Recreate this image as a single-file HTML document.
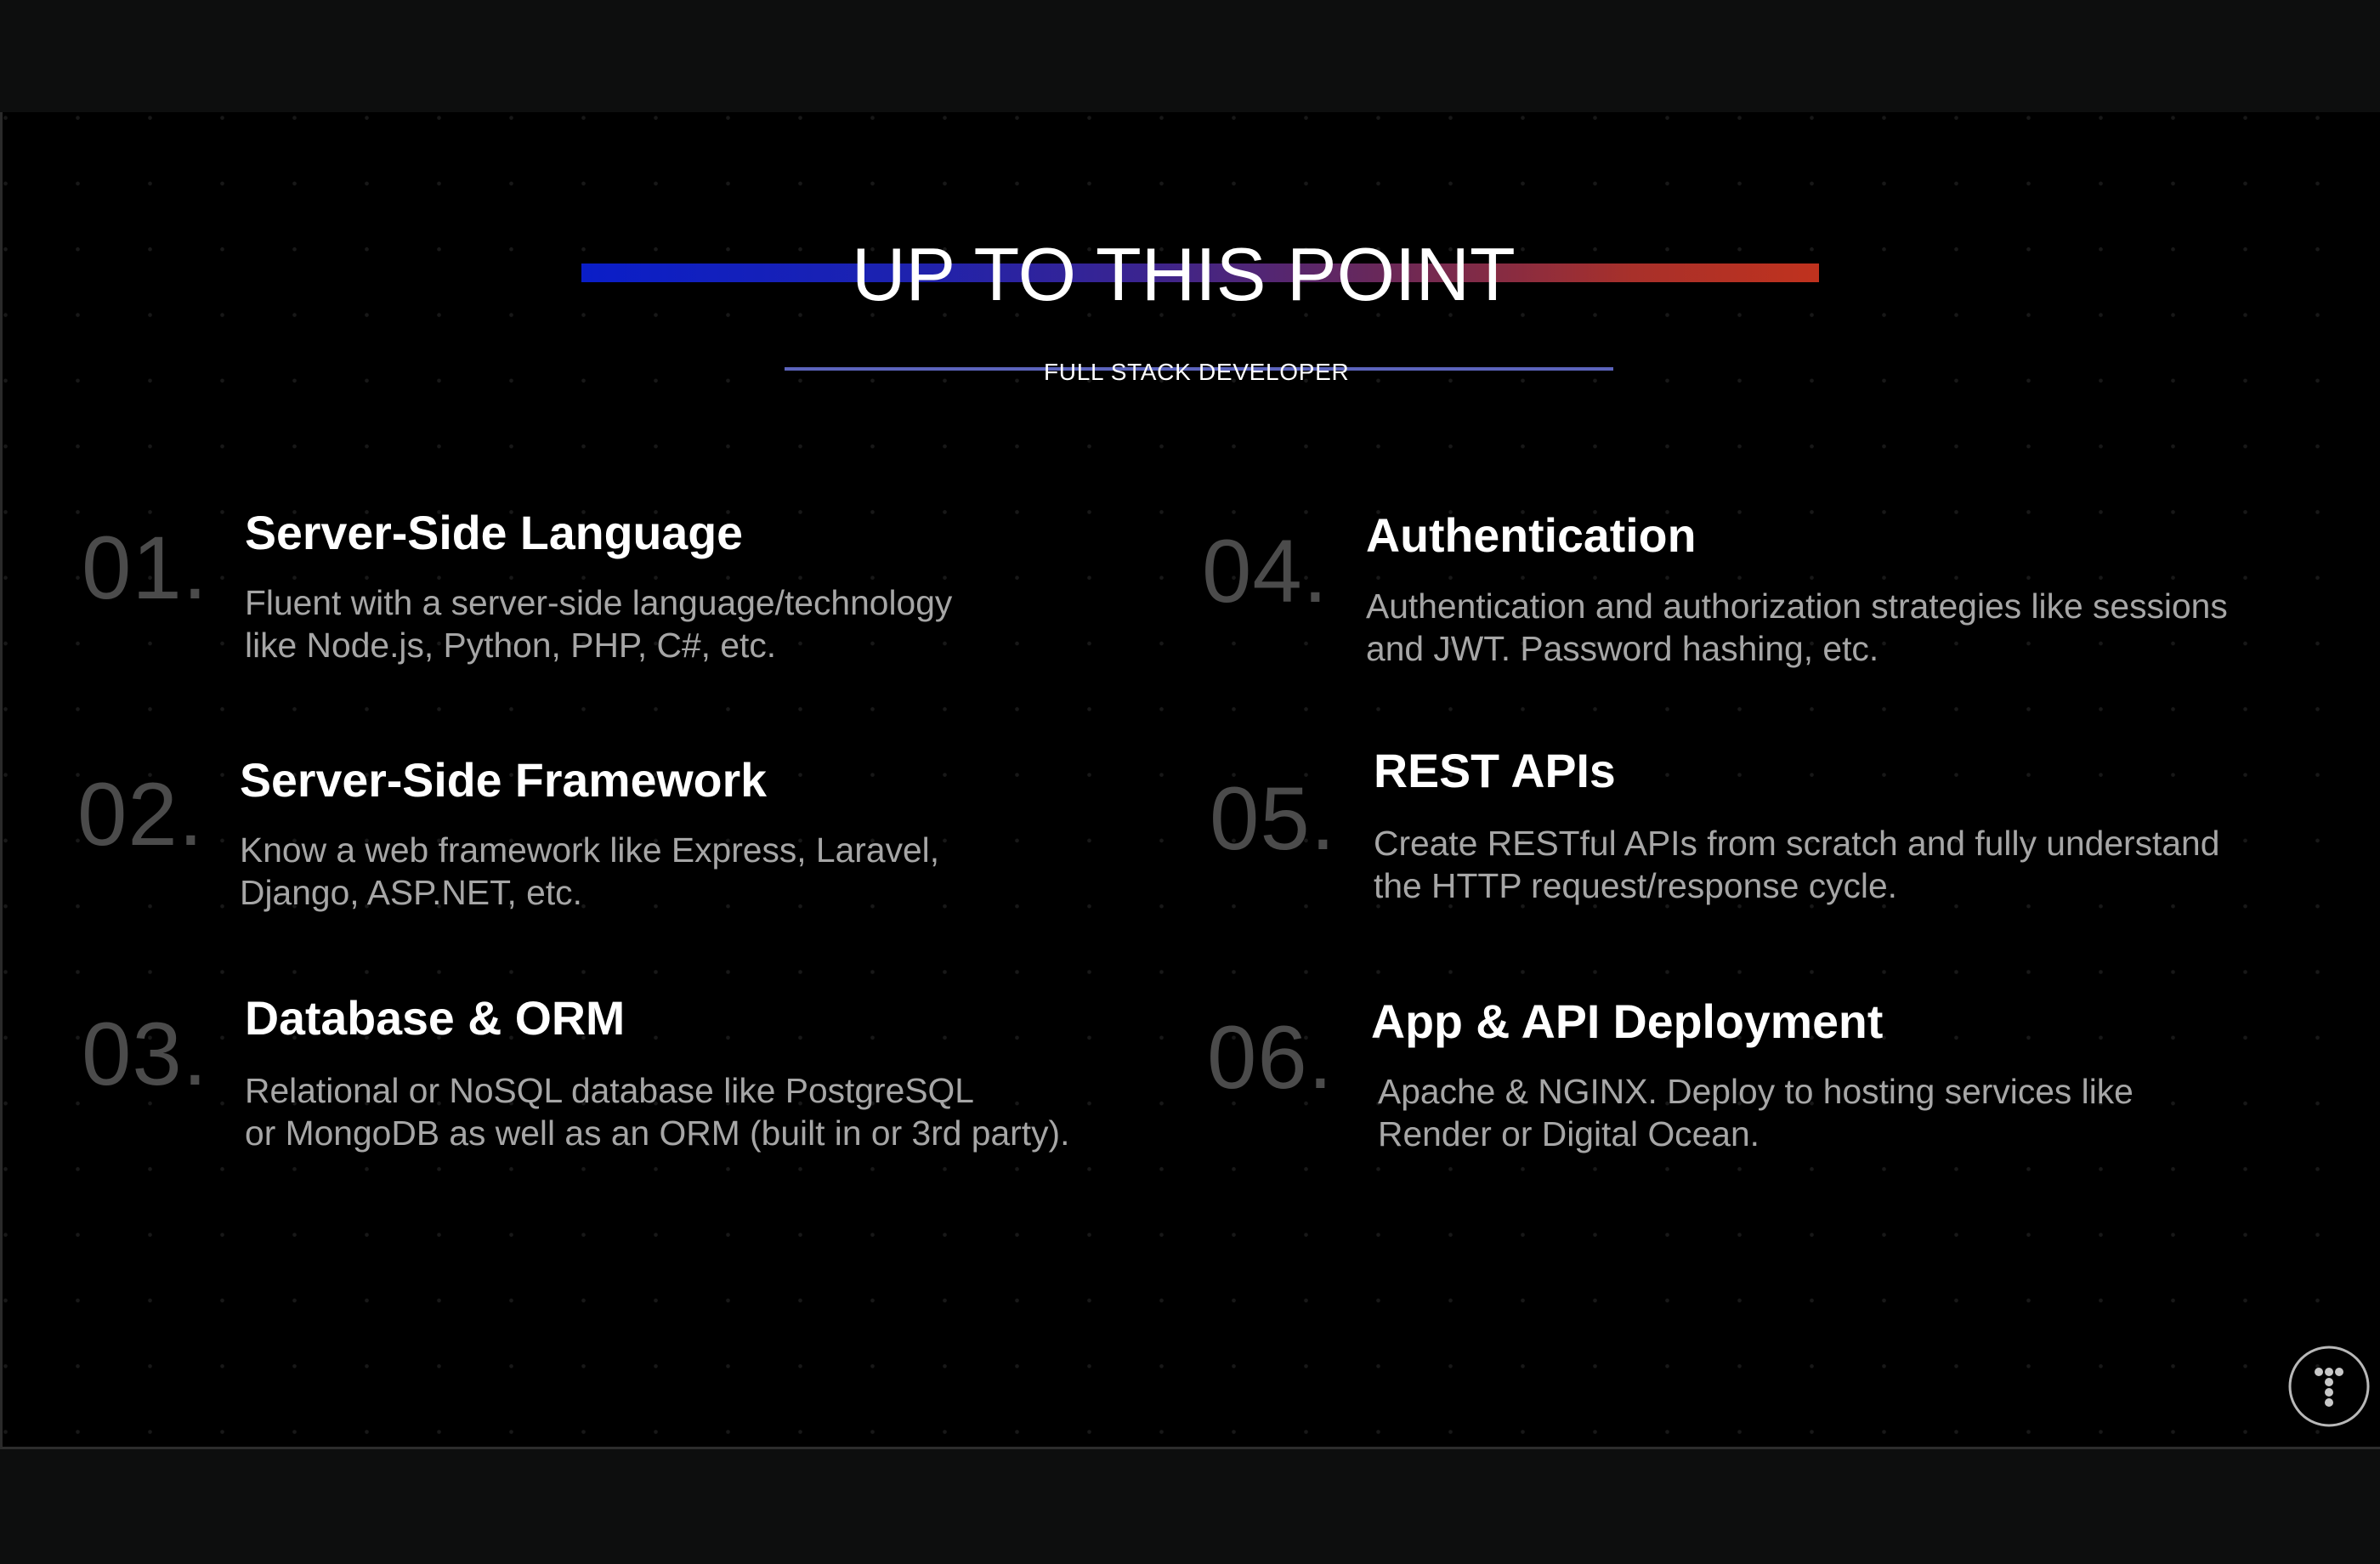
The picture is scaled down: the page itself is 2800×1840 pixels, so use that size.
<!DOCTYPE html>
<html><head><meta charset="utf-8"><style>
*{margin:0;padding:0;box-sizing:border-box}
body{width:2800px;height:1840px;background:#0d0e0e;position:relative;overflow:hidden;font-family:"Liberation Sans",Arial,sans-serif}
#main{position:absolute;left:0;top:132px;width:2800px;height:1573px;background-color:#000;
background-image:radial-gradient(circle,#181818 0 2px,transparent 2.6px);
background-size:85px 77.3px;background-position:-39px -32px;border-left:3px solid #2a2a2a;border-bottom:3px solid #2c2c2c}
.a{position:absolute;white-space:nowrap;line-height:1}
.num{font-size:105px;color:#4b4b4b;letter-spacing:1px}
.t{font-size:55.5px;font-weight:bold;color:#fff}
.d{font-size:40.8px;color:#a6a6a6;line-height:50px}
</style></head><body>
<div id="main"></div>
<div class="a" style="left:684px;top:310px;width:1456px;height:22px;background:linear-gradient(90deg,#0a1ec8 0%,#1c22b0 25%,#3a2490 45%,#6a2858 65%,#a8302a 85%,#c0321e 100%)"></div>
<div class="a" style="left:1002px;top:279px;font-size:88px;color:#fff;">UP TO THIS POINT</div>
<div class="a" style="left:923px;top:432px;width:975px;height:4px;background:#5c64bc"></div>
<div class="a" style="left:1228px;top:424px;font-size:28px;color:#fff;letter-spacing:0.7px">FULL STACK DEVELOPER</div>

<div class="a num" style="left:96px;top:616px">01.</div>
<div class="a t" style="left:288px;top:600px">Server-Side Language</div>
<div class="a d" style="left:288px;top:684px">Fluent with a server-side language/technology<br>like Node.js, Python, PHP, C#, etc.</div>

<div class="a num" style="left:91px;top:906px">02.</div>
<div class="a t" style="left:282px;top:891px">Server-Side Framework</div>
<div class="a d" style="left:282px;top:975px">Know a web framework like Express, Laravel,<br>Django, ASP.NET, etc.</div>

<div class="a num" style="left:96px;top:1188px">03.</div>
<div class="a t" style="left:288px;top:1171px">Database &amp; ORM</div>
<div class="a d" style="left:288px;top:1258px">Relational or NoSQL database like PostgreSQL<br>or MongoDB as well as an ORM (built in or 3rd party).</div>

<div class="a num" style="left:1414px;top:620px">04.</div>
<div class="a t" style="left:1607px;top:603px">Authentication</div>
<div class="a d" style="left:1607px;top:688px">Authentication and authorization strategies like sessions<br>and JWT. Password hashing, etc.</div>

<div class="a num" style="left:1423px;top:911px">05.</div>
<div class="a t" style="left:1616px;top:880px">REST APIs</div>
<div class="a d" style="left:1616px;top:967px">Create RESTful APIs from scratch and fully understand<br>the HTTP request/response cycle.</div>

<div class="a num" style="left:1420px;top:1192px">06.</div>
<div class="a t" style="left:1613px;top:1175px">App &amp; API Deployment</div>
<div class="a d" style="left:1621px;top:1259px">Apache &amp; NGINX. Deploy to hosting services like<br>Render or Digital Ocean.</div>

<svg class="a" style="left:2690px;top:1581px" width="100" height="100" viewBox="2690 1581 100 100">
<circle cx="2740" cy="1631" r="46" fill="none" stroke="#b8b8b8" stroke-width="3"/>
<g fill="#c8c8c8"><circle cx="2728" cy="1614" r="5"/><circle cx="2740" cy="1614" r="5"/><circle cx="2752" cy="1614" r="5"/><circle cx="2740" cy="1626" r="5"/><circle cx="2740" cy="1638" r="5"/><circle cx="2740" cy="1650" r="5"/></g>
</svg>
</body></html>
